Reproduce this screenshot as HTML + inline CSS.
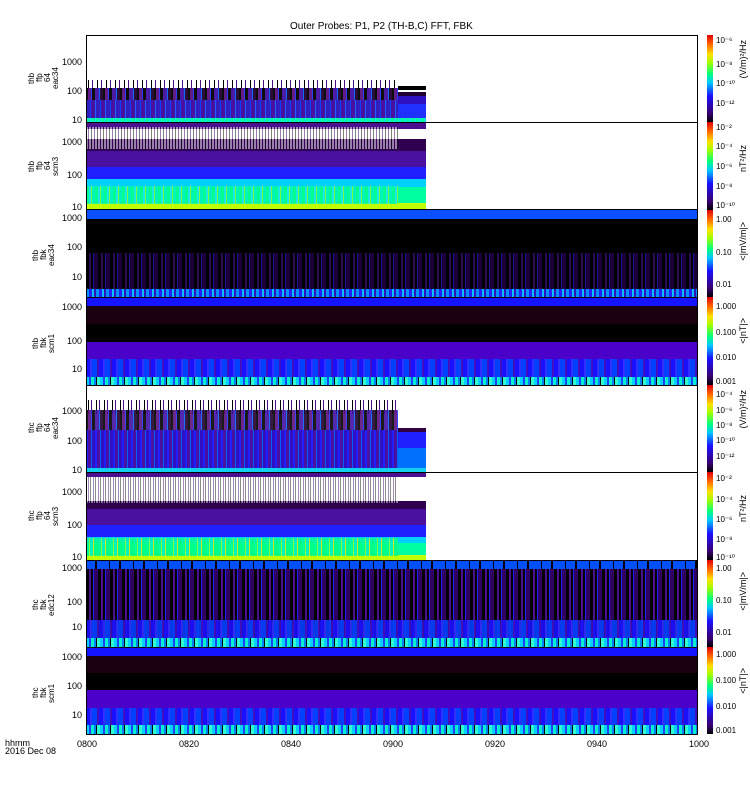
<!DOCTYPE html>
<html><head><meta charset="utf-8"><style>
body{margin:0;background:#fff;width:750px;height:800px;position:relative;overflow:hidden;font-family:"Liberation Sans",sans-serif;color:#000}
.a{position:absolute}
.t{position:absolute;font-size:10px;line-height:10px}
.yl{position:absolute;font-size:9px;line-height:9px;text-align:right;width:40px;left:42px}
.nm{position:absolute;font-size:8px;line-height:8px;text-align:center;writing-mode:vertical-rl;transform:rotate(180deg);height:60px}
.cb{position:absolute;left:707px;width:6px;background:linear-gradient(to top,#000 0%,#3a0070 10%,#1a10ff 30%,#00c8ff 45%,#00ff80 55%,#a0ff00 68%,#ffe000 78%,#ff6000 90%,#e00000 100%)}
.cl{position:absolute;left:716px;font-size:8px;line-height:8px}
.un{position:absolute;font-size:9px;line-height:10px;writing-mode:vertical-rl;transform:rotate(180deg);white-space:nowrap;left:738px}
.frame{position:absolute;left:86px;width:612px;border:1px solid #000;box-sizing:border-box}
.s1{background:repeating-linear-gradient(90deg,#000 0 2px,#5a1080 2px 5px,#2030ff 5px 6px,#000 6px 9px,#4010a0 9px 13px,#0060ff 13px 14px,#200030 14px 17px)}
.s2{background:repeating-linear-gradient(90deg,#00d0ff 0 3px,#2040ff 3px 5px,#00f0d0 5px 8px,#0080ff 8px 10px,#000 10px 11px,#30ffd0 11px 14px)}
.s3{background:repeating-linear-gradient(90deg,#1a10ff 0 4px,#3030ff 4px 6px,#0040ff 6px 11px,#4010c0 11px 13px)}
.s4{background:repeating-linear-gradient(90deg,#0050ff 0 9px,#000 9px 11px,#0050ff 11px 23px,#000 23px 24px)}
.s5{background:repeating-linear-gradient(90deg,#000 0 3px,#4a1090 3px 5px,#000 5px 7px,#2020ff 7px 8px,#300060 8px 12px)}
</style></head><body>
<div class="t" style="left:290px;top:22px">Outer Probes: P1, P2 (TH-B,C) FFT, FBK</div>

<!-- Panel 1 -->
<div class="a" style="left:86px;top:80px;width:312px;height:10px;background:repeating-linear-gradient(90deg,#fff 0 2px,#000 2px 3px,#fff 3px 6px,#4a1080 6px 7px,#fff 7px 9px)"></div>
<div class="a s1" style="left:86px;top:88px;width:312px;height:30px;opacity:.95"></div>
<div class="a" style="left:86px;top:100px;width:312px;height:18px;background:repeating-linear-gradient(90deg,#3020c0 0 4px,#0a40ff 4px 5px,#4a10a0 5px 9px,#2060ff 9px 10px)"></div>
<div class="a" style="left:86px;top:118px;width:340px;height:4px;background:repeating-linear-gradient(90deg,#00ffa0 0 3px,#10e0e0 3px 5px)"></div>
<div class="a" style="left:398px;top:86px;width:28px;height:32px;background:linear-gradient(#000 0 4px,#fff 4px 6px,#200030 6px 10px,#3010c0 10px 18px,#2030ff 18px 32px)"></div>
<div class="frame" style="top:35px;height:88px"></div>
<div class="yl" style="top:58px">1000</div><div class="yl" style="top:87px">100</div><div class="yl" style="top:116px">10</div>
<div class="nm" style="left:28px;top:48px">thb<br>ffp<br>64<br>eac34</div>
<div class="cb" style="top:35px;height:87px"></div>
<div class="cl" style="top:37px">10⁻⁶</div><div class="cl" style="top:61px">10⁻⁸</div><div class="cl" style="top:80px">10⁻¹⁰</div><div class="cl" style="top:100px">10⁻¹²</div>
<div class="un" style="top:40px">(V/m)²/Hz</div>

<!-- Panel 2 -->
<div class="a" style="left:86px;top:123px;width:340px;height:87px;background:linear-gradient(#4a1090 0 6px,#fff 6px 16px,#300050 16px 28px,#4a10a0 28px 44px,#2020ff 44px 56px,#00d0ff 56px 64px,#00ffa0 64px 80px,#c0ff00 80px 87px)"></div>
<div class="a" style="left:86px;top:127px;width:312px;height:22px;background:repeating-linear-gradient(90deg,#fff 0 2px,#3a0060 2px 3px,#fff 3px 5px,#000 5px 6px);opacity:.5"></div>
<div class="a" style="left:86px;top:186px;width:312px;height:18px;background:repeating-linear-gradient(90deg,#00ff90 0 3px,#20e0ff 3px 5px,#90ff20 5px 6px,#00f0c0 6px 9px);opacity:.8"></div>
<div class="frame" style="top:122px;height:89px"></div>
<div class="yl" style="top:138px">1000</div><div class="yl" style="top:171px">100</div><div class="yl" style="top:203px">10</div>
<div class="nm" style="left:28px;top:136px">thb<br>ffp<br>64<br>scm3</div>
<div class="cb" style="top:122px;height:88px"></div>
<div class="cl" style="top:124px">10⁻²</div><div class="cl" style="top:143px">10⁻⁴</div><div class="cl" style="top:163px">10⁻⁶</div><div class="cl" style="top:183px">10⁻⁸</div><div class="cl" style="top:202px">10⁻¹⁰</div>
<div class="un" style="top:145px">nT²/Hz</div>

<!-- Panel 3 -->
<div class="a" style="left:86px;top:210px;width:612px;height:87px;background:#000"></div>
<div class="a" style="left:86px;top:210px;width:612px;height:9px;background:#0a50ff"></div>
<div class="a s5" style="left:86px;top:253px;width:612px;height:36px;opacity:.6"></div>
<div class="a" style="left:86px;top:289px;width:612px;height:8px;background:repeating-linear-gradient(90deg,#0090ff 0 3px,#2020ff 3px 6px,#00c0ff 6px 8px,#3010c0 8px 10px)"></div>
<div class="frame" style="top:209px;height:89px"></div>
<div class="yl" style="top:214px">1000</div><div class="yl" style="top:243px">100</div><div class="yl" style="top:273px">10</div>
<div class="nm" style="left:32px;top:225px">thb<br>fbk<br>eac34</div>
<div class="cb" style="top:210px;height:87px"></div>
<div class="cl" style="top:216px">1.00</div><div class="cl" style="top:249px">0.10</div><div class="cl" style="top:281px">0.01</div>
<div class="un" style="top:222px">&lt;|mV/m|&gt;</div>

<!-- Panel 4 -->
<div class="a" style="left:86px;top:297px;width:612px;height:88px;background:linear-gradient(#1414ff 0 9px,#1a0010 9px 27px,#000 27px 45px,#4a00c8 45px 62px,#0a1eff 62px 80px,#10c0f0 80px 88px)"></div>
<div class="a s3" style="left:86px;top:359px;width:612px;height:18px"></div>
<div class="a s2" style="left:86px;top:377px;width:612px;height:8px"></div>
<div class="frame" style="top:297px;height:89px"></div>
<div class="yl" style="top:303px">1000</div><div class="yl" style="top:337px">100</div><div class="yl" style="top:365px">10</div>
<div class="nm" style="left:32px;top:313px">thb<br>fbk<br>scm1</div>
<div class="cb" style="top:297px;height:88px"></div>
<div class="cl" style="top:303px">1.000</div><div class="cl" style="top:329px">0.100</div><div class="cl" style="top:354px">0.010</div><div class="cl" style="top:378px">0.001</div>
<div class="un" style="top:318px">&lt;|nT|&gt;</div>

<!-- Panel 5 -->
<div class="a" style="left:86px;top:400px;width:312px;height:14px;background:repeating-linear-gradient(90deg,#fff 0 2px,#000 2px 3px,#fff 3px 5px,#4a1080 5px 6px,#fff 6px 8px)"></div>
<div class="a s1" style="left:86px;top:410px;width:312px;height:58px;opacity:.9"></div>
<div class="a" style="left:86px;top:430px;width:312px;height:38px;background:repeating-linear-gradient(90deg,#2020ff 0 2px,#4a10a0 2px 5px,#0060ff 5px 6px,#3010c0 6px 9px)"></div>
<div class="a" style="left:398px;top:428px;width:28px;height:40px;background:linear-gradient(#300040 0 4px,#2020ff 4px 20px,#0070ff 20px 40px)"></div>
<div class="a" style="left:86px;top:468px;width:340px;height:4px;background:#10d0f0"></div>
<div class="frame" style="top:385px;height:88px"></div>
<div class="yl" style="top:407px">1000</div><div class="yl" style="top:437px">100</div><div class="yl" style="top:466px">10</div>
<div class="nm" style="left:28px;top:398px">thc<br>ffp<br>64<br>eac34</div>
<div class="cb" style="top:385px;height:87px"></div>
<div class="cl" style="top:391px">10⁻⁴</div><div class="cl" style="top:407px">10⁻⁶</div><div class="cl" style="top:422px">10⁻⁸</div><div class="cl" style="top:437px">10⁻¹⁰</div><div class="cl" style="top:453px">10⁻¹²</div>
<div class="un" style="top:390px">(V/m)²/Hz</div>

<!-- Panel 6 -->
<div class="a" style="left:86px;top:473px;width:340px;height:87px;background:linear-gradient(#4a1090 0 4px,#fff 4px 28px,#300050 28px 36px,#4a10a0 36px 52px,#2020ff 52px 64px,#00d0ff 64px 70px,#00ffa0 70px 82px,#c0ff00 82px 87px)"></div>
<div class="a" style="left:86px;top:477px;width:312px;height:26px;background:repeating-linear-gradient(90deg,#fff 0 2px,#300060 2px 3px,#fff 3px 4px,#000 4px 5px);opacity:.45"></div>
<div class="a" style="left:86px;top:538px;width:312px;height:18px;background:repeating-linear-gradient(90deg,#00ff90 0 3px,#a0ff20 3px 4px,#00f0c0 4px 7px,#ffe000 7px 8px,#00ff80 8px 12px);opacity:.8"></div>
<div class="frame" style="top:472px;height:89px"></div>
<div class="yl" style="top:488px">1000</div><div class="yl" style="top:521px">100</div><div class="yl" style="top:553px">10</div>
<div class="nm" style="left:28px;top:486px">thc<br>ffp<br>64<br>scm3</div>
<div class="cb" style="top:472px;height:88px"></div>
<div class="cl" style="top:475px">10⁻²</div><div class="cl" style="top:496px">10⁻⁴</div><div class="cl" style="top:516px">10⁻⁶</div><div class="cl" style="top:536px">10⁻⁸</div><div class="cl" style="top:554px">10⁻¹⁰</div>
<div class="un" style="top:495px">nT²/Hz</div>

<!-- Panel 7 -->
<div class="a s5" style="left:86px;top:560px;width:612px;height:87px"></div>
<div class="a s4" style="left:86px;top:560px;width:612px;height:9px"></div>
<div class="a s3" style="left:86px;top:620px;width:612px;height:18px;opacity:.9"></div>
<div class="a s2" style="left:86px;top:638px;width:612px;height:9px"></div>
<div class="frame" style="top:560px;height:88px"></div>
<div class="yl" style="top:564px">1000</div><div class="yl" style="top:598px">100</div><div class="yl" style="top:623px">10</div>
<div class="nm" style="left:32px;top:575px">thc<br>fbk<br>edc12</div>
<div class="cb" style="top:560px;height:87px"></div>
<div class="cl" style="top:565px">1.00</div><div class="cl" style="top:597px">0.10</div><div class="cl" style="top:629px">0.01</div>
<div class="un" style="top:572px">&lt;|mV/m|&gt;</div>

<!-- Panel 8 -->
<div class="a" style="left:86px;top:647px;width:612px;height:87px;background:linear-gradient(#1414ff 0 9px,#1a0010 9px 26px,#000 26px 43px,#4a00c8 43px 61px,#0a1eff 61px 78px,#10e0e0 78px 87px)"></div>
<div class="a s3" style="left:86px;top:708px;width:612px;height:17px"></div>
<div class="a s2" style="left:86px;top:725px;width:612px;height:9px"></div>
<div class="frame" style="top:647px;height:88px"></div>
<div class="yl" style="top:653px">1000</div><div class="yl" style="top:682px">100</div><div class="yl" style="top:711px">10</div>
<div class="nm" style="left:32px;top:663px">thc<br>fbk<br>scm1</div>
<div class="cb" style="top:647px;height:87px"></div>
<div class="cl" style="top:651px">1.000</div><div class="cl" style="top:677px">0.100</div><div class="cl" style="top:703px">0.010</div><div class="cl" style="top:727px">0.001</div>
<div class="un" style="top:668px">&lt;|nT|&gt;</div>

<!-- time axis -->
<div class="t" style="left:5px;top:739px;font-size:9px;line-height:8px">hhmm<br>2016 Dec 08</div>
<div class="t" style="left:77px;top:739px;font-size:9px">0800</div>
<div class="t" style="left:179px;top:739px;font-size:9px">0820</div>
<div class="t" style="left:281px;top:739px;font-size:9px">0840</div>
<div class="t" style="left:383px;top:739px;font-size:9px">0900</div>
<div class="t" style="left:485px;top:739px;font-size:9px">0920</div>
<div class="t" style="left:587px;top:739px;font-size:9px">0940</div>
<div class="t" style="left:689px;top:739px;font-size:9px">1000</div>
</body></html>
